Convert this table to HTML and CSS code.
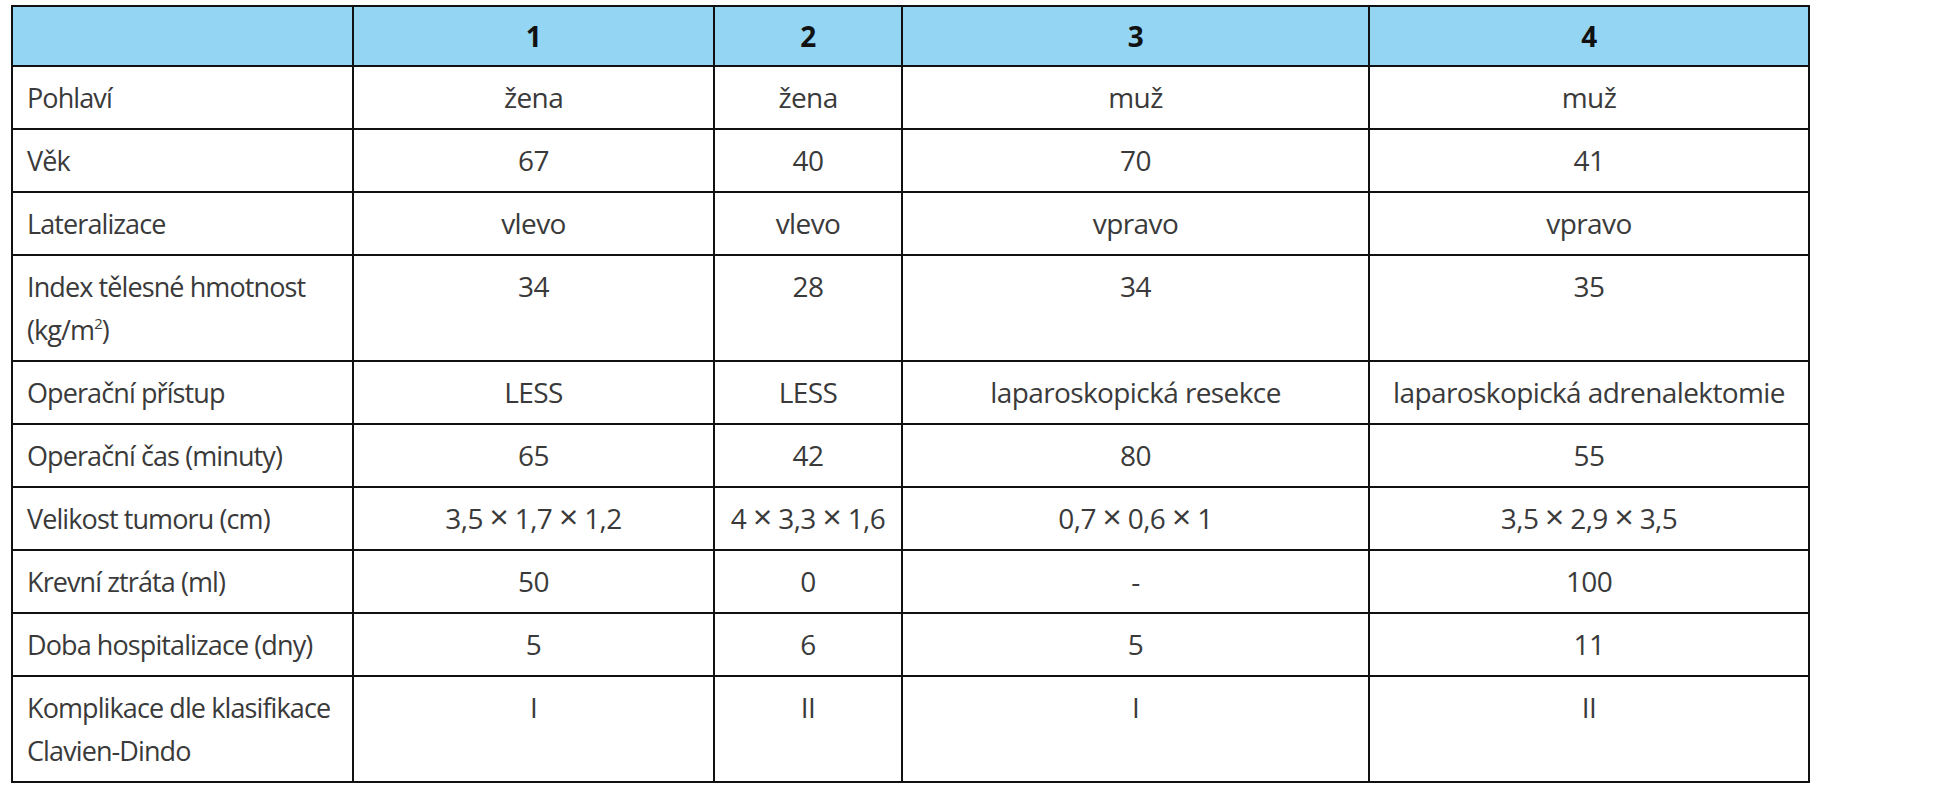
FILE: index.html
```html
<!DOCTYPE html>
<html lang="cs">
<head>
<meta charset="utf-8">
<title>Tabulka</title>
<link rel="stylesheet" href="styles.css">
</head>
<body>
<table class="data">
  <colgroup>
    <col class="c-label">
    <col class="c-1">
    <col class="c-2">
    <col class="c-3">
    <col class="c-4">
  </colgroup>
  <thead>
    <tr class="head">
      <th></th>
      <th>1</th>
      <th>2</th>
      <th>3</th>
      <th>4</th>
    </tr>
  </thead>
  <tbody>
    <tr><td class="label">Pohlaví</td><td>žena</td><td>žena</td><td>muž</td><td>muž</td></tr>
    <tr><td class="label">Věk</td><td>67</td><td>40</td><td>70</td><td>41</td></tr>
    <tr><td class="label">Lateralizace</td><td>vlevo</td><td>vlevo</td><td>vpravo</td><td>vpravo</td></tr>
    <tr><td class="label">Index tělesné hmotnost<br>(kg/m<sup>2</sup>)</td><td>34</td><td>28</td><td>34</td><td>35</td></tr>
    <tr><td class="label">Operační přístup</td><td>LESS</td><td>LESS</td><td>laparoskopická resekce</td><td>laparoskopická adrenalektomie</td></tr>
    <tr><td class="label">Operační čas (minuty)</td><td>65</td><td>42</td><td>80</td><td>55</td></tr>
    <tr><td class="label">Velikost tumoru (cm)</td><td>3,5 <span class="times">×</span> 1,7 <span class="times">×</span> 1,2</td><td>4 <span class="times">×</span> 3,3 <span class="times">×</span> 1,6</td><td>0,7 <span class="times">×</span> 0,6 <span class="times">×</span> 1</td><td>3,5 <span class="times">×</span> 2,9 <span class="times">×</span> 3,5</td></tr>
    <tr><td class="label">Krevní ztráta (ml)</td><td>50</td><td>0</td><td>-</td><td>100</td></tr>
    <tr><td class="label">Doba hospitalizace (dny)</td><td>5</td><td>6</td><td>5</td><td>11</td></tr>
    <tr><td class="label">Komplikace dle klasifikace<br>Clavien-Dindo</td><td>I</td><td>II</td><td>I</td><td>II</td></tr>
  </tbody>
</table>
</body>
</html>
```

FILE: styles.css
```css
html, body {
  margin: 0;
  padding: 0;
  background: #ffffff;
}

body {
  font-family: "Open Sans", "Noto Sans", "DejaVu Sans", sans-serif;
  color: #3a3a3a;
}

.data {
  margin: 5px 0 0 11px;
  width: 1797px;
  table-layout: fixed;
  border-collapse: collapse;
  border: 2px solid #111;
}

.c-label { width: 341px; }
.c-1 { width: 361px; }
.c-2 { width: 188px; }
.c-3 { width: 467px; }
.c-4 { width: 440px; }

.data th,
.data td {
  border: 2px solid #111;
  padding: 9px 12px;
  font-size: 28px;
  line-height: 43px;
  text-align: center;
  vertical-align: top;
  white-space: nowrap;
  letter-spacing: -0.6px;
}

.head th {
  background: #94d5f4;
  color: #111;
  font-weight: 700;
  line-height: 42px;
  padding-top: 8px;
  padding-bottom: 8px;
}

.data td.label {
  text-align: left;
  padding-left: 14px;
  font-size: 27px;
  letter-spacing: -0.9px;
}

.data sup {
  font-size: 0.55em;
  line-height: 0;
  vertical-align: 0.75em;
}

.times {
  font-size: 1.2em;
  line-height: 1;
}
```
